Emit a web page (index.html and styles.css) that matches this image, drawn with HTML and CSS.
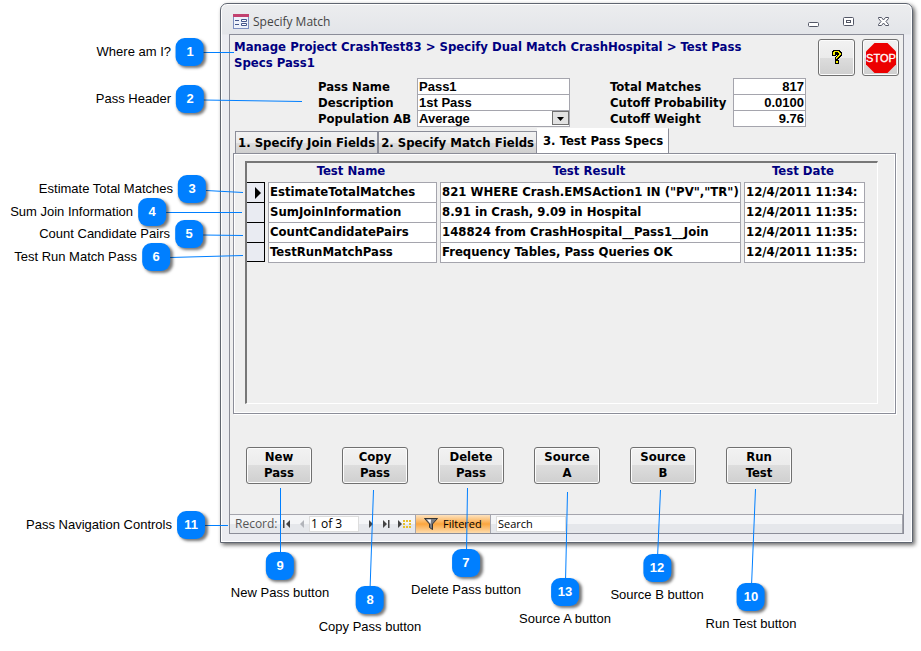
FILE: index.html
```
<!DOCTYPE html>
<html lang="en">
<head>
<meta charset="utf-8">
<title>Specify Match</title>
<link rel="stylesheet" href="styles.css">
</head>
<body>
<main class="stage">
  <section class="window" aria-label="Specify Match">
    <header class="titlebar">
      <svg class="form-icon" width="16" height="16" viewBox="0 0 16 16" aria-hidden="true">
        <rect x=".5" y=".5" width="15" height="14" fill="#eef2fb" stroke="#7d8fc0"/>
        <path d="M0 0h16v3H0z" fill="#c2416f"/>
        <path d="M2 6.500h4M2 10.500h4" stroke="#44568c"/>
        <path d="M8.500 5.500h5v2h-5zM8.500 9.500h5v2h-5z" fill="#fff" stroke="#44568c"/>
      </svg>
      <h1 class="title">Specify Match</h1>
      <div class="window-controls">
        <button class="window-control" type="button" aria-label="Minimize"><svg width="12" height="12" viewBox="0 0 12 12"><rect x=".5" y="6.500" width="10" height="4" rx="1" fill="#fff" stroke="#535766"/></svg></button>
        <button class="window-control" type="button" aria-label="Restore"><svg width="12" height="12" viewBox="0 0 12 12"><rect x=".5" y="1.500" width="10" height="8" rx="1" fill="#fff" stroke="#535766"/><rect x="3.500" y="4.500" width="4" height="2" fill="#fff" stroke="#535766"/></svg></button>
        <button class="window-control" type="button" aria-label="Close"><svg width="12" height="12" viewBox="0 0 12 12"><path d="M.5 1.500h3L5.500 4l2-2.500h3v1L8 5.500l2.500 3v1h-3L5.500 7l-2 2.500h-3v-1L3 5.500l-2.500-3z" fill="#fff" stroke="#535766"/></svg></button>
      </div>
    </header>
    <div class="form">
      <div class="form-top">
        <h2 class="breadcrumb">Manage Project CrashTest83 &gt; Specify Dual Match CrashHospital &gt; Test Pass Specs Pass1</h2>
        <div class="tools">
          <button class="tool" type="button" aria-label="Help"><svg width="14" height="18" viewBox="0 0 14 18" shape-rendering="crispEdges"><path d="M3 1h7v1h1v1h1v4h-1v1h-1v1H9v1H8v1H5V8h1V7h1V6H6v1H2V3h0V2h1zM5 11h4v4H5z" fill="#000"/><path d="M4 2h5v1h1v1h1v2h-1v1H9v1H8v1H7v1H6V8h1V7h1V6h1V4H8V3H5v3H3V3h1zM6 12h2v2H6z" fill="#f4ee00"/></svg></button>
          <button class="tool" type="button" aria-label="Stop"><svg width="32" height="32" viewBox="0 0 32 32"><path d="M9.500 1h13l8.500 8.500v13L22.500 31h-13L1 22.500v-13z" fill="#ec0000"/><text class="stop-text" x="16" y="20" text-anchor="middle">STOP</text></svg></button>
        </div>
      </div>
      <div class="pass-header">
        <div class="fields fields-pass">
          <label for="pass-name">Pass Name</label><input id="pass-name" value="Pass1">
          <label for="description">Description</label><input id="description" value="1st Pass">
          <label for="population">Population AB</label>
          <span class="select-wrap"><select id="population"><option>Average</option></select><svg class="select-arrow" width="17" height="14" viewBox="0 0 17 14" aria-hidden="true"><rect x=".5" y=".5" width="16" height="13" fill="#e2e2e2" stroke="#707070"/><path d="M5 6h7L8.500 10z" fill="#000"/></svg></span>
        </div>
        <div class="fields fields-cutoff">
          <label for="total">Total Matches</label><input id="total" value="817">
          <label for="probability">Cutoff Probability</label><input id="probability" value="0.0100">
          <label for="weight">Cutoff Weight</label><input id="weight" value="9.76">
        </div>
      </div>
      <div class="tabs" role="tablist">
        <button class="tab" type="button" role="tab">1. Specify Join Fields</button>
        <button class="tab" type="button" role="tab">2. Specify Match Fields</button>
        <button class="tab tab-active" type="button" role="tab" aria-selected="true">3. Test Pass Specs</button>
      </div>
      <div class="tab-panel">
        <div class="sheet">
          <table class="tests">
            <colgroup><col class="col-mark"><col class="col-name"><col class="col-result"><col class="col-date"></colgroup>
            <thead><tr><td></td><th>Test Name</th><th>Test Result</th><th>Test Date</th></tr></thead>
            <tbody>
              <tr><td class="mark"><svg width="6" height="12" viewBox="0 0 6 12" aria-label="Current record"><path d="M0 0l6 6-6 6z"/></svg></td><td><div class="cell">EstimateTotalMatches</div></td><td><div class="cell">821 WHERE Crash.EMSAction1 IN ("PV","TR")</div></td><td><div class="cell">12/4/2011 11:34:</div></td></tr>
              <tr><td class="mark"></td><td><div class="cell">SumJoinInformation</div></td><td><div class="cell">8.91 in Crash, 9.09 in Hospital</div></td><td><div class="cell">12/4/2011 11:35:</div></td></tr>
              <tr><td class="mark"></td><td><div class="cell">CountCandidatePairs</div></td><td><div class="cell">148824 from CrashHospital__Pass1__Join</div></td><td><div class="cell">12/4/2011 11:35:</div></td></tr>
              <tr><td class="mark"></td><td><div class="cell">TestRunMatchPass</div></td><td><div class="cell">Frequency Tables, Pass Queries OK</div></td><td><div class="cell">12/4/2011 11:35:</div></td></tr>
            </tbody>
          </table>
        </div>
      </div>
      <div class="actions">
        <button class="action" type="button">New<br>Pass</button>
        <button class="action" type="button">Copy<br>Pass</button>
        <button class="action" type="button">Delete<br>Pass</button>
        <button class="action" type="button">Source<br>A</button>
        <button class="action" type="button">Source<br>B</button>
        <button class="action" type="button">Run<br>Test</button>
      </div>
      <footer class="record-bar">
        <label class="record-label" for="record">Record:</label>
        <button class="nav" type="button" aria-label="First record"><svg width="8" height="8" viewBox="0 0 8 8"><path d="M0 0h1.500v8H0zM7 0v8L3 4z" fill="#444"/></svg></button>
        <button class="nav" type="button" aria-label="Previous record"><svg width="8" height="8" viewBox="0 0 8 8"><path d="M6 0v8L2 4z" fill="#b2b4ba"/></svg></button>
        <input class="record-input" id="record" value="1 of 3">
        <button class="nav" type="button" aria-label="Next record"><svg width="8" height="8" viewBox="0 0 8 8"><path d="M2 0l4 4-4 4z" fill="#444"/></svg></button>
        <button class="nav" type="button" aria-label="Last record"><svg width="8" height="8" viewBox="0 0 8 8"><path d="M1 0l4 4-4 4zM6 0h1.500v8H6z" fill="#444"/></svg></button>
        <button class="nav nav-new" type="button" aria-label="New record"><svg width="13" height="8" viewBox="0 0 13 8"><path d="M0 0l4 4-4 4z" fill="#444"/><path d="M5 0h2v2H5zM8 0h2v2H8zM11 0h2v2h-2zM5 3h2v2H5zM11 3h2v2h-2zM5 6h2v2H5zM8 6h2v2H8zM11 6h2v2h-2z" fill="#e8c02c"/></svg></button>
        <button class="filter" type="button"><svg width="14" height="12" viewBox="0 0 14 12" aria-hidden="true"><path d="M.5.500h13L8.500 6v5.500l-3-2V6z" fill="#777a80" stroke="#333"/><path d="M3 1.500h4L6.500 6z" fill="#fff"/></svg>Filtered</button>
        <input class="search" aria-label="Search" value="Search">
      </footer>
    </div>
  </section>

  <svg class="leaders" width="921" height="651" viewBox="0 0 921 651" aria-hidden="true">
    <path d="M203 52.500H234M203 100L302 101.500M206 190.500L243 192.500M165 212.500H242M203 235L243 235.500M170 257.500L243 255.500M205 525.500H228M280.500 488V555M373.500 490L370 590M467.500 488L466.500 553M567.500 492L565.500 582M660.500 490L657.500 558M755.500 489L751.500 586"/>
  </svg>

  <div class="callout at-1"><span>Where am I?</span><b>1</b></div>
  <div class="callout at-2"><span>Pass Header</span><b>2</b></div>
  <div class="callout at-3"><span>Estimate Total Matches</span><b>3</b></div>
  <div class="callout at-4"><span>Sum Join Information</span><b>4</b></div>
  <div class="callout at-5"><span>Count Candidate Pairs</span><b>5</b></div>
  <div class="callout at-6"><span>Test Run Match Pass</span><b>6</b></div>
  <div class="callout at-11"><span>Pass Navigation Controls</span><b>11</b></div>
  <div class="callout below at-9"><b>9</b><span>New Pass button</span></div>
  <div class="callout below at-8"><b>8</b><span>Copy Pass button</span></div>
  <div class="callout below at-7"><b>7</b><span>Delete Pass button</span></div>
  <div class="callout below at-13"><b>13</b><span>Source A button</span></div>
  <div class="callout below at-12"><b>12</b><span>Source B button</span></div>
  <div class="callout below at-10"><b>10</b><span>Run Test button</span></div>
</main>
</body>
</html>
```
FILE: styles.css
```
* { box-sizing: border-box; }
body {
  margin: 0;
  background: #fff;
  color: #000;
  font: bold 13px/16px "DejaVu Sans Condensed", "DejaVu Sans", sans-serif;
}
h1, h2 { margin: 0; font-size: inherit; }
button, input, select { margin: 0; padding: 0; font: inherit; color: inherit; border-radius: 0; }
svg { display: block; flex: none; }

.stage { position: relative; padding: 3px 8px 107px 220px; }

.window {
  padding: 0 8px 8px;
  border: 1px solid #5f6570;
  border-radius: 7px 7px 0 0;
  background: linear-gradient(#ecedef, #e3e5e9 30px, #ebecf1 31px);
  box-shadow: inset 0 0 0 1px #fff, 2px 2px 4px #0009;
}
.titlebar {
  display: flex;
  align-items: center;
  height: 30px;
  padding: 6px 14px 0 4px;
}
.title {
  flex: 1;
  margin-left: 4px;
  font: 12px/16px "Open Sans", sans-serif;
  color: #444;
}
.window-controls { display: flex; gap: 23px; }
.window-control { width: 12px; height: 12px; border: 0; background: none; }

.form { border: 1px solid #8b8d98; background: #efefef; }
.form-top { display: flex; justify-content: space-between; height: 43px; padding: 4px 4px 0; }
.breadcrumb { max-width: 530px; color: #000080; }
.tools { display: flex; gap: 7px; }
.tool {
  display: grid;
  place-items: center;
  width: 37px;
  height: 37px;
  border: 1px solid #707070;
  border-radius: 3px;
  background: linear-gradient(#f2f2f2, #ebebeb 50%, #dddddd 50%, #cfcfcf);
  box-shadow: inset 0 0 0 1px #fcfcfc;
}
.stop-text { font: 11px "Liberation Sans", sans-serif; fill: #fff; stroke: #fff; stroke-width: .3px; }

.pass-header { display: flex; gap: 40px; padding-left: 88px; }
.fields { display: grid; grid-auto-rows: 16px; line-height: 18px; }
.fields-pass { grid-template-columns: 99px 153px; }
.fields-cutoff { grid-template-columns: 123px 73px; }
.fields input, .fields select {
  width: 100%;
  height: 17px;
  padding: 0 1px;
  border: 1px solid #a5a5ad;
  background: #fff;
  font: bold 13px/15px "Liberation Sans", sans-serif;
}
.fields-cutoff input { text-align: right; }
.fields select { appearance: none; display: block; }
.select-wrap { position: relative; }
.select-arrow { position: absolute; top: 1px; right: 1px; pointer-events: none; }

.tabs { display: flex; align-items: flex-end; height: 27px; padding-left: 5px; }
.tab {
  height: 22px;
  padding: 0 2px;
  border: 1px solid #8b8d98;
  border-bottom: 0;
  background: linear-gradient(#f2f2f2, #ebebeb 50%, #dddddd 50%, #cfcfcf);
  white-space: nowrap;
}
.tab-active {
  height: 25px;
  padding: 0 5px;
  border-color: #fff #8b8d98 #fff #fff;
  background: #fff;
}
.tab-panel {
  margin: 0 7px 0 3px;
  padding: 7px 17px 9px 11px;
  border: 1px solid #8b8d98;
  box-shadow: inset 1px 1px #fff, inset -1px -1px #fff, 1px 1px #fff;
}
.sheet {
  min-height: 243px;
  border: 1px solid;
  border-width: 2px 1px 1px 2px;
  border-color: #777 #fff #fff #777;
}
.tests { width: 618px; table-layout: fixed; border-collapse: separate; border-spacing: 0; }
.col-mark { width: 18px; }
.col-name { width: 172px; }
.col-result { width: 304px; }
.col-date { width: 124px; }
.tests th, .tests td { padding: 0; }
.tests th { height: 19px; vertical-align: top; color: #000080; }
.tests tbody tr { height: 20px; }
.tests .mark { border: 1px solid #000; border-width: 1px 1px 0 0; background: #e9ebf2; }
.tests tr:last-child .mark { border-bottom-width: 1px; }
.mark svg { margin-left: 8px; }
.cell {
  height: 21px;
  margin: 0 0 -1px 3px;
  padding: 0 1px;
  overflow: hidden;
  border: 1px solid #a5a5ad;
  background: #fff;
  line-height: 18px;
  white-space: nowrap;
}

.actions { display: flex; gap: 30px; padding: 33px 16px 30px; }
.action {
  width: 66px;
  height: 37px;
  padding-bottom: 2px;
  border: 1px solid #707070;
  border-radius: 3px;
  background: linear-gradient(#f2f2f2, #ebebeb 50%, #dddddd 50%, #cfcfcf);
  box-shadow: inset 0 0 0 1px #fcfcfc;
}

.record-bar {
  display: flex;
  align-items: center;
  height: 19px;
  padding-left: 5px;
  border-top: 1px solid #a5a5ad;
  border-right: 1px solid #a5a5ad;
  background: linear-gradient(#f4f5f7 50%, #e5e7eb 50%);
  font: 12px/16px "Open Sans", sans-serif;
}
.record-label { width: 44px; color: #555; }
.nav { display: grid; place-items: center; width: 15px; height: 16px; border: 0; background: none; }
.record-input { width: 50px; height: 16px; margin-right: 4px; padding: 0 1px; border: 1px solid #ddd; background: #fff; }
.nav-new { width: 22px; }
.filter {
  display: flex;
  align-items: center;
  gap: 5px;
  width: 76px;
  height: 18px;
  padding-left: 8px;
  border: 0;
  border-left: 1px solid #a5a5ad;
  border-right: 1px solid #a5a5ad;
  background: linear-gradient(#fde3c0, #fba63f 50%, #fddcae);
  font-size: 11px;
}
.search { width: 70px; height: 16px; margin-left: 5px; padding: 0 1px; border: 1px solid #ddd; background: #fff; font-size: 11px; }

.leaders { position: absolute; top: 0; left: 0; pointer-events: none; }
.leaders path { fill: none; stroke: #007fff; }

.callout {
  position: absolute;
  display: flex;
  align-items: center;
  gap: 5px;
  transform: translate(-100%, 0);
  font: 13px/16px "Liberation Sans", sans-serif;
  white-space: nowrap;
}
.callout b {
  width: 28px;
  height: 28px;
  border-radius: 9px;
  background: #007fff;
  box-shadow: 2px 2px 3px #0008;
  color: #fff;
  font: bold 13px/28px "Liberation Sans", sans-serif;
  text-align: center;
}
.below { flex-direction: column; transform: translate(-50%, 0); }
.at-1 { left: 204px; top: 38px; }
.at-2 { left: 204px; top: 85px; }
.at-3 { left: 206px; top: 175px; }
.at-4 { left: 166px; top: 198px; }
.at-5 { left: 203px; top: 220px; }
.at-6 { left: 170px; top: 243px; }
.at-11 { left: 205px; top: 511px; }
.at-9 { left: 280px; top: 552px; }
.at-8 { left: 370px; top: 586px; }
.at-7 { left: 466px; top: 549px; }
.at-13 { left: 565px; top: 578px; }
.at-12 { left: 657px; top: 554px; }
.at-10 { left: 751px; top: 583px; }
```
